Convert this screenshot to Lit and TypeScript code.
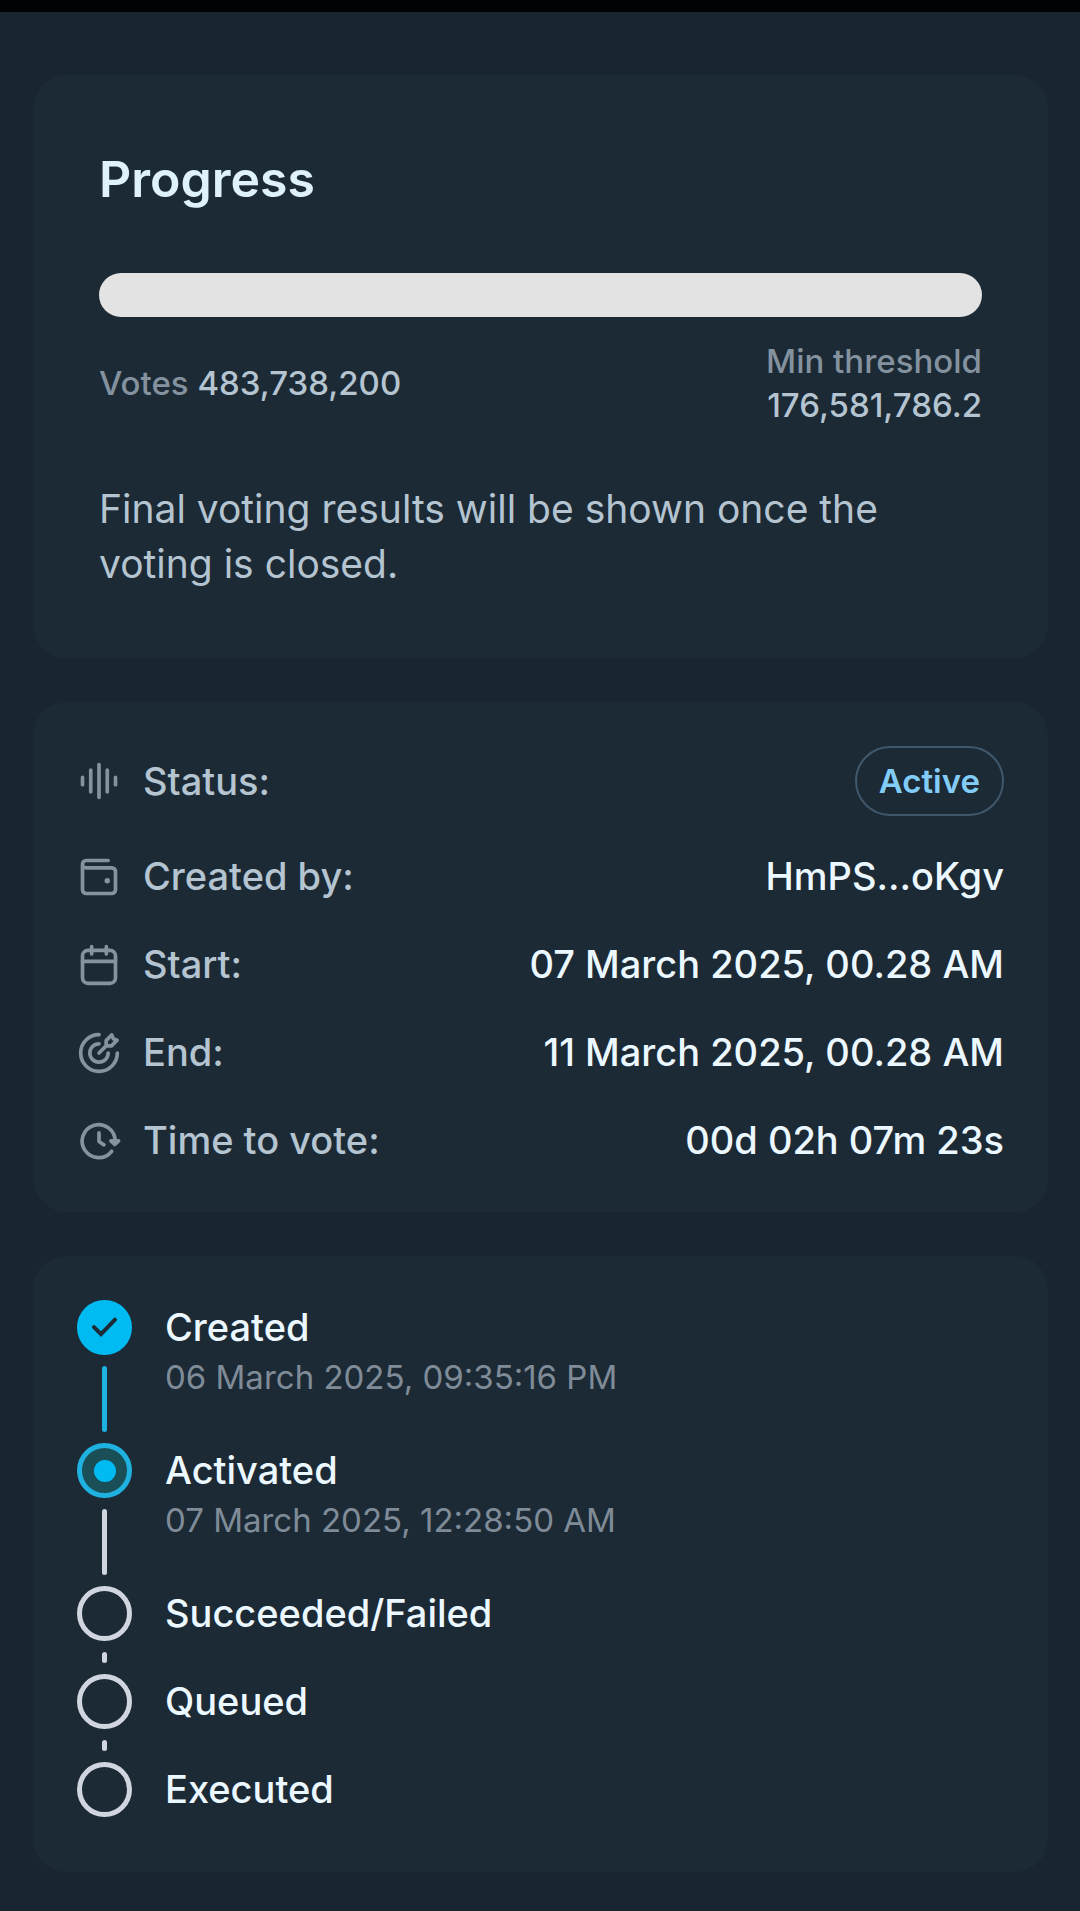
import { LitElement, html, css, svg, nothing } from "lit";
import type { SVGTemplateResult } from "lit";
import { customElement, property } from "lit/decorators.js";
import { classMap } from "lit/directives/class-map.js";

type StepState = "done" | "current" | "pending";

interface Step {
  title: string;
  date?: string;
  state: StepState;
}

interface Detail {
  icon: string;
  label: string;
  value: string;
  kind: "badge" | "link" | "text";
}

const icons: Record<string, SVGTemplateResult> = {
  status: svg`<path d="M3 10v4M7.5 6v12M12 3v18M16.5 6v12M21 10v4" />`,
  wallet: svg`
    <path d="M17 3H5a2 2 0 0 0 0 4h14a2 2 0 0 1 2 2v10a2 2 0 0 1-2 2H5a2 2 0 0 1-2-2V5" />
    <circle cx="16.5" cy="14" r="1.5" fill="currentColor" stroke="none" />`,
  calendar: svg`
    <rect x="3" y="4" width="18" height="18" rx="3" />
    <path d="M8 2v4M16 2v4M3 10h18" />`,
  target: svg`
    <path d="M12 2a10 10 0 1 0 10 10M12 7a5 5 0 1 0 5 5" />
    <path d="M12 12l3.9-3.9M15.9 8.1V5.2L19 2.1l.8 2.1 2.1.8-3.1 3.1z" />`,
  clock: svg`
    <path d="M18.9 17.6A9 9 0 1 1 20.8 12M12 7.6v4.7l2.7 1.8" />
    <path d="M18.5 11.9h4.2l-2.1 2z" fill="currentColor" />`,
};

@customElement("app-icon")
export class AppIcon extends LitElement {
  @property() name = "";

  static styles = css`
    :host {
      display: block;
      width: 44px;
      height: 44px;
      color: #84939f;
    }
    .icon {
      display: block;
      width: 100%;
      height: 100%;
      overflow: visible;
    }
  `;

  render() {
    return html`<svg
      class="icon"
      viewBox="0 0 24 24"
      fill="none"
      stroke="currentColor"
      stroke-width="2"
      stroke-linecap="round"
      stroke-linejoin="round"
      aria-hidden="true"
    >
      ${icons[this.name]}
    </svg>`;
  }
}

@customElement("app-root")
export class AppRoot extends LitElement {
  private details: Detail[] = [
    { icon: "status", label: "Status:", value: "Active", kind: "badge" },
    { icon: "wallet", label: "Created by:", value: "HmPS...oKgv", kind: "link" },
    { icon: "calendar", label: "Start:", value: "07 March 2025, 00.28 AM", kind: "text" },
    { icon: "target", label: "End:", value: "11 March 2025, 00.28 AM", kind: "text" },
    { icon: "clock", label: "Time to vote:", value: "00d 02h 07m 23s", kind: "text" },
  ];

  private steps: Step[] = [
    { title: "Created", date: "06 March 2025, 09:35:16 PM", state: "done" },
    { title: "Activated", date: "07 March 2025, 12:28:50 AM", state: "current" },
    { title: "Succeeded/Failed", state: "pending" },
    { title: "Queued", state: "pending" },
    { title: "Executed", state: "pending" },
  ];

  static styles = css`
    :host {
      display: block;
      box-sizing: border-box;
      min-height: 100vh;
      border-top: 12px solid #000203;
      background: #192530;
      color: #ecf8ff;
      font-family: Inter, Roboto, "Liberation Sans", sans-serif;
      font-size: 38px;
      font-weight: 500;
      line-height: 55px;
      font-optical-sizing: none;
    }
    .page {
      display: flex;
      flex-direction: column;
      gap: 44px;
      padding: 63px 32px 39px 33px;
    }
    .card {
      padding: 44px;
      border-radius: 33px;
      background: #1c2a36;
    }
    .progress-card {
      display: flex;
      flex-direction: column;
      padding: 66px;
    }
    .heading {
      margin: 0 0 55px;
      color: #dff1fa;
      font-size: 50px;
      font-weight: 600;
      line-height: 77px;
    }
    .bar {
      appearance: none;
      display: block;
      width: 100%;
      height: 44px;
      border: 0;
      border-radius: 22px;
      overflow: hidden;
      background: #e3e3e3;
    }
    .bar::-webkit-progress-bar {
      background: #e3e3e3;
    }
    .tally {
      display: flex;
      align-items: center;
      justify-content: space-between;
      margin: 22px 0 54px;
      color: #84929f;
      font-size: 33px;
      line-height: 44px;
    }
    .amount {
      color: #b4c4d0;
    }
    .threshold {
      display: flex;
      flex-direction: column;
      align-items: flex-end;
    }
    .note {
      margin: 0 0 1px;
      color: #b4c4d0;
      font-size: 39px;
      font-weight: 400;
    }
    .details {
      display: flex;
      flex-direction: column;
      gap: 33px;
      margin: 0;
    }
    .detail {
      display: flex;
      align-items: center;
      justify-content: space-between;
    }
    .label {
      display: flex;
      align-items: center;
      gap: 22px;
      color: #b4c4d0;
    }
    .value {
      margin: 0;
    }
    .link {
      color: inherit;
      text-decoration: none;
    }
    .badge {
      display: block;
      padding: 11px 22px;
      border: 2px solid #40586b;
      border-radius: 35px;
      color: #82cdf8;
      font-size: 33px;
      font-weight: 600;
      line-height: 44px;
    }
    .timeline {
      margin: 0;
      padding-bottom: 55px;
      list-style: none;
    }
    .step {
      display: flex;
      gap: 33px;
    }
    .rail {
      display: flex;
      flex-direction: column;
      align-items: center;
      gap: 11px;
    }
    .body {
      padding-bottom: 33px;
    }
    .step:last-child .body {
      padding-bottom: 0;
    }
    .marker {
      display: grid;
      place-items: center;
      box-sizing: border-box;
      width: 55px;
      height: 55px;
      border: 5px solid #d0d5df;
      border-radius: 50%;
    }
    .marker.done {
      border-color: #00bbf2;
      background: #00bbf2;
    }
    .marker.current {
      border-color: #1fb2e1;
      background: #1a4f58;
    }
    .check {
      display: block;
      width: 33px;
      height: 33px;
    }
    .dot {
      width: 22px;
      height: 22px;
      border-radius: 50%;
      background: #00bbf2;
    }
    .line {
      flex: 1;
      width: 5px;
      margin-bottom: 11px;
      border-radius: 3px;
      background: #d0d5df;
    }
    .line.done {
      background: #1fb2e1;
    }
    .title {
      margin: 0;
      font-size: inherit;
      font-weight: 500;
    }
    .date {
      display: block;
      padding-bottom: 11px;
      color: #7f8c98;
      font-size: 33px;
      font-weight: 400;
      line-height: 44px;
    }
  `;

  private renderValue(detail: Detail) {
    if (detail.kind === "badge") {
      return html`<span class="badge">${detail.value}</span>`;
    }
    if (detail.kind === "link") {
      return html`<a class="link" href="#creator">${detail.value}</a>`;
    }
    return detail.value;
  }

  private renderMark(state: StepState) {
    if (state === "done") {
      return html`<svg class="check" viewBox="0 0 33 33" fill="none" aria-hidden="true">
        <path
          d="M6 16.2l7 7L27 8.6"
          stroke="#1c2a36"
          stroke-width="4"
          stroke-linecap="round"
          stroke-linejoin="miter"
        />
      </svg>`;
    }
    return state === "current" ? html`<span class="dot"></span>` : nothing;
  }

  private renderStep(step: Step, index: number) {
    const last = index === this.steps.length - 1;
    const markerClasses = { marker: true, done: step.state === "done", current: step.state === "current" };
    const lineClasses = { line: true, done: step.state === "done" };
    return html`<li class="step">
      <div class="rail">
        <span class=${classMap(markerClasses)}>${this.renderMark(step.state)}</span>
        ${last ? nothing : html`<span class=${classMap(lineClasses)}></span>`}
      </div>
      <div class="body">
        <h3 class="title">${step.title}</h3>
        ${step.date ? html`<time class="date">${step.date}</time>` : nothing}
      </div>
    </li>`;
  }

  render() {
    return html`<main class="page">
      <section class="card progress-card">
        <h2 class="heading" id="progress-title">Progress</h2>
        <progress class="bar" value="0" max="100" aria-labelledby="progress-title"></progress>
        <div class="tally">
          <span>Votes <span class="amount">483,738,200</span></span>
          <span class="threshold">
            <span>Min threshold</span>
            <span class="amount">176,581,786.2</span>
          </span>
        </div>
        <p class="note">Final voting results will be shown once the voting is closed.</p>
      </section>

      <section class="card">
        <dl class="details">
          ${this.details.map(
            (detail) => html`<div class="detail">
              <dt class="label"><app-icon name=${detail.icon}></app-icon>${detail.label}</dt>
              <dd class="value">${this.renderValue(detail)}</dd>
            </div>`
          )}
        </dl>
      </section>

      <ol class="card timeline">
        ${this.steps.map((step, index) => this.renderStep(step, index))}
      </ol>
    </main>`;
  }
}
